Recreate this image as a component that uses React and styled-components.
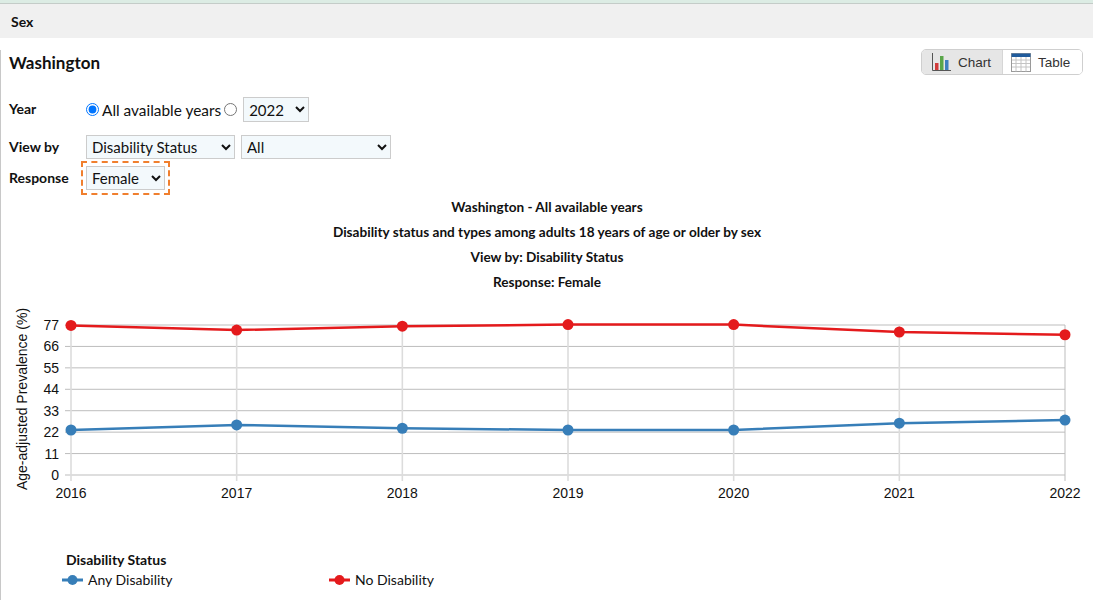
import React, { useState } from "react";
import styled, { createGlobalStyle } from "styled-components";

const GlobalStyle = createGlobalStyle`
  body {
    margin: 0;
    background: #fff;
    font-family: Lato, "Liberation Sans", sans-serif;
    color: #111;
  }
`;

// chart data, read from the screenshot
const years = [2016, 2017, 2018, 2019, 2020, 2021, 2022];
const series = [
  {
    name: "Any Disability",
    color: "#377eb8",
    values: [23.1, 25.7, 24.0, 23.1, 23.1, 26.6, 28.2],
  },
  {
    name: "No Disability",
    color: "#e41a1c",
    values: [76.8, 74.4, 76.4, 77.2, 77.2, 73.4, 72.0],
  },
];
const ticks = [0, 11, 22, 33, 44, 55, 66, 77];

const X0 = 70;
const X1 = 1064;
const Y0 = 475;
const Y1 = 325;
const xOf = (i) => X0 + ((X1 - X0) * i) / (years.length - 1);
const yOf = (v) => Y0 - ((Y0 - Y1) * v) / 77;

const Page = styled.div`
  border-top: 3px solid #dcece4;
  width: 1093px;
  height: 597px;
  overflow: hidden;
`;
const SectionHeader = styled.div`
  border-top: 1px solid #c4ccc8;
  height: 34px;
  background: #f0f0f0;
  display: flex;
  align-items: center;
  padding-left: 11px;
  font-weight: 700;
  font-size: 14px;
`;
const Panel = styled.div`
  border-left: 1px solid #c8c8c8;
  height: 100%;
`;
const Body = styled.div`
  padding: 0 10px 0 8px;
`;
const TitleRow = styled.div`
  margin-top: 12px;
  height: 25px;
  display: flex;
  align-items: center;
  justify-content: space-between;
`;
const Title = styled.h2`
  margin: 0;
  font-size: 17px;
  font-weight: 700;
`;
const Toggle = styled.div`
  display: flex;
  height: 26px;
  margin-top: -1px;
  border: 1px solid #cfcfcf;
  border-radius: 5px;
  overflow: hidden;
  box-sizing: border-box;
`;
const ToggleButton = styled.button`
  display: flex;
  align-items: center;
  gap: 7px;
  border: none;
  border-left: ${(p) => (p.$first ? "none" : "1px solid #d6d6d6")};
  background: ${(p) => (p.$active ? "#e6e6e6" : "#fff")};
  width: ${(p) => p.$width}px;
  padding: 0 0 0 ${(p) => p.$pad}px;
  font-family: "Liberation Sans", Arial, sans-serif;
  font-size: 13.5px;
  color: #333;
  cursor: pointer;
`;
const Form = styled.div`
  margin-top: 22px;
  display: flex;
  flex-direction: column;
`;
const Row = styled.div`
  display: flex;
  align-items: center;
  height: ${(p) => p.$h}px;
  margin-top: ${(p) => p.$mt || 0}px;
`;
const Label = styled.label`
  width: 77px;
  font-weight: 700;
  font-size: 14px;
  flex-shrink: 0;
  margin-top: -2px;
`;
const RadioLabel = styled.label`
  display: flex;
  align-items: center;
  font-size: 15.4px;
  margin-right: ${(p) => p.$mr || 0}px;
  input {
    margin: 0 3px 0 0;
    width: 13px;
    height: 13px;
  }
`;
const Select = styled.select`
  height: ${(p) => p.$h || 24}px;
  width: ${(p) => p.$w}px;
  margin-left: ${(p) => p.$ml || 0}px;
  background: #f3f9fc;
  border: 1px solid #cccccc;
  border-radius: 0;
  font-family: Lato, "Liberation Sans", sans-serif;
  font-size: 15px;
  color: #111;
  padding: 0 1px;
`;
const Highlight = styled.div`
  margin-left: -5px;
  padding: 3px;
  border: 2px dashed #f07f2e;
  display: flex;
`;
const ChartTitles = styled.div`
  text-align: center;
  font-weight: 700;
  font-size: 13.6px;
  line-height: 25px;
  margin-left: -8px;
  margin-right: -10px;
`;
const ChartSvg = styled.svg`
  display: block;
  margin-left: -8px;
  font-family: "Liberation Sans", Arial, sans-serif;
`;
const Legend = styled.div`
  margin-top: 40px;
  padding-left: 57px;
`;
const LegendTitle = styled.div`
  font-weight: 700;
  font-size: 14px;
  line-height: 20px;
`;
const LegendItems = styled.div`
  display: flex;
  margin-left: -4px;
`;
const LegendItem = styled.div`
  display: flex;
  align-items: center;
  gap: 5px;
  width: 267px;
  font-size: 14px;
  line-height: 20px;
`;

const ChartIcon = () => (
  <svg width="20" height="20" viewBox="0 0 20 20">
    <path d="M1.5 1v17.5H20" stroke="#555" strokeWidth="1" fill="none" />
    <rect x="4" y="11" width="3.5" height="7" fill="#d13b3b" />
    <rect x="9" y="4" width="3.5" height="14" fill="#5aa64a" />
    <rect x="14" y="8" width="3.5" height="10" fill="#3f7fc0" />
  </svg>
);

const TableIcon = () => (
  <svg width="20" height="19" viewBox="0 0 20 19">
    <rect x="0.5" y="0.5" width="19" height="18" fill="#fff" stroke="#9a9a9a" />
    <rect x="0.5" y="0.5" width="19" height="3.5" fill="#1f5b9c" />
    {[7, 10.5, 14].map((y) => (
      <line key={y} x1="1" x2="19" y1={y} y2={y} stroke="#c4c4c4" />
    ))}
    {[5, 10, 15].map((x) => (
      <line key={x} x1={x} x2={x} y1="4" y2="18.5" stroke="#c4c4c4" />
    ))}
  </svg>
);

const LegendMarker = ({ color }) => (
  <svg width="21" height="12" viewBox="0 0 21 12">
    <line x1="0" x2="21" y1="6" y2="6" stroke={color} strokeWidth="3" />
    <circle cx="10.5" cy="6" r="5" fill={color} />
  </svg>
);

const LineChart = () => (
  <ChartSvg width="1092" height="215" viewBox="0 295 1092 215">
    {ticks.map((t) => (
      <line
        key={t}
        x1={64}
        x2={X1}
        y1={yOf(t)}
        y2={yOf(t)}
        stroke="#bdbdbd"
        strokeWidth="1"
      />
    ))}
    {years.map((y, i) => (
      <line
        key={y}
        x1={xOf(i)}
        x2={xOf(i)}
        y1={Y1}
        y2={Y0 + 6}
        stroke={i === years.length - 1 ? "#bdbdbd" : "#dcdcdc"}
        strokeWidth={i === years.length - 1 ? 1 : 1.6}
      />
    ))}
    {ticks.map((t) => (
      <text
        key={t}
        x={58}
        y={yOf(t) + 5}
        textAnchor="end"
        fontSize="14"
        fill="#111"
      >
        {t}
      </text>
    ))}
    {years.map((y, i) => (
      <text
        key={y}
        x={xOf(i)}
        y={498}
        textAnchor="middle"
        fontSize="14"
        fill="#111"
      >
        {y}
      </text>
    ))}
    <text
      transform="translate(26 399) rotate(-90)"
      textAnchor="middle"
      fontSize="14"
      fill="#111"
    >
      Age-adjusted Prevalence (%)
    </text>
    {series.map((s) => (
      <g key={s.name}>
        <polyline
          points={s.values.map((v, i) => `${xOf(i)},${yOf(v)}`).join(" ")}
          fill="none"
          stroke={s.color}
          strokeWidth="2.5"
        />
        {s.values.map((v, i) => (
          <circle key={i} cx={xOf(i)} cy={yOf(v)} r="5.5" fill={s.color} />
        ))}
      </g>
    ))}
  </ChartSvg>
);

const App = () => {
  const [view, setView] = useState("chart");
  const [yearMode, setYearMode] = useState("all");

  return (
    <Page>
      <GlobalStyle />
      <SectionHeader>Sex</SectionHeader>
      <Panel>
        <Body>
          <TitleRow>
            <Title>Washington</Title>
            <Toggle>
              <ToggleButton
                $first
                $active={view === "chart"}
                $width={80}
                $pad={9}
                onClick={() => setView("chart")}
              >
                <ChartIcon />
                Chart
              </ToggleButton>
              <ToggleButton
                $active={view === "table"}
                $width={80}
                $pad={8}
                onClick={() => setView("table")}
              >
                <TableIcon />
                Table
              </ToggleButton>
            </Toggle>
          </TitleRow>

          <Form>
            <Row $h={25}>
              <Label>Year</Label>
              <RadioLabel $mr={3}>
                <input
                  type="radio"
                  name="year"
                  checked={yearMode === "all"}
                  onChange={() => setYearMode("all")}
                />
                All available years
              </RadioLabel>
              <RadioLabel>
                <input
                  type="radio"
                  name="year"
                  checked={yearMode === "one"}
                  onChange={() => setYearMode("one")}
                />
              </RadioLabel>
              <Select $w={66} $h={25} $ml={3} defaultValue="2022">
                <option>2022</option>
                <option>2021</option>
                <option>2020</option>
              </Select>
            </Row>
            <Row $h={24} $mt={13}>
              <Label>View by</Label>
              <Select $w={149} defaultValue="Disability Status">
                <option>Disability Status</option>
              </Select>
              <Select $w={150} $ml={6} defaultValue="All">
                <option>All</option>
              </Select>
            </Row>
            <Row $h={34} $mt={2}>
              <Label>Response</Label>
              <Highlight>
                <Select $w={79} defaultValue="Female">
                  <option>Female</option>
                  <option>Male</option>
                </Select>
              </Highlight>
            </Row>
          </Form>

          <ChartTitles>
            <div>Washington - All available years</div>
            <div>Disability status and types among adults 18 years of age or older by sex</div>
            <div>View by: Disability Status</div>
            <div>Response: Female</div>
          </ChartTitles>

          <LineChart />

          <Legend>
            <LegendTitle>Disability Status</LegendTitle>
            <LegendItems>
              {series.map((s) => (
                <LegendItem key={s.name}>
                  <LegendMarker color={s.color} />
                  {s.name}
                </LegendItem>
              ))}
            </LegendItems>
          </Legend>
        </Body>
      </Panel>
    </Page>
  );
};

export default App;
